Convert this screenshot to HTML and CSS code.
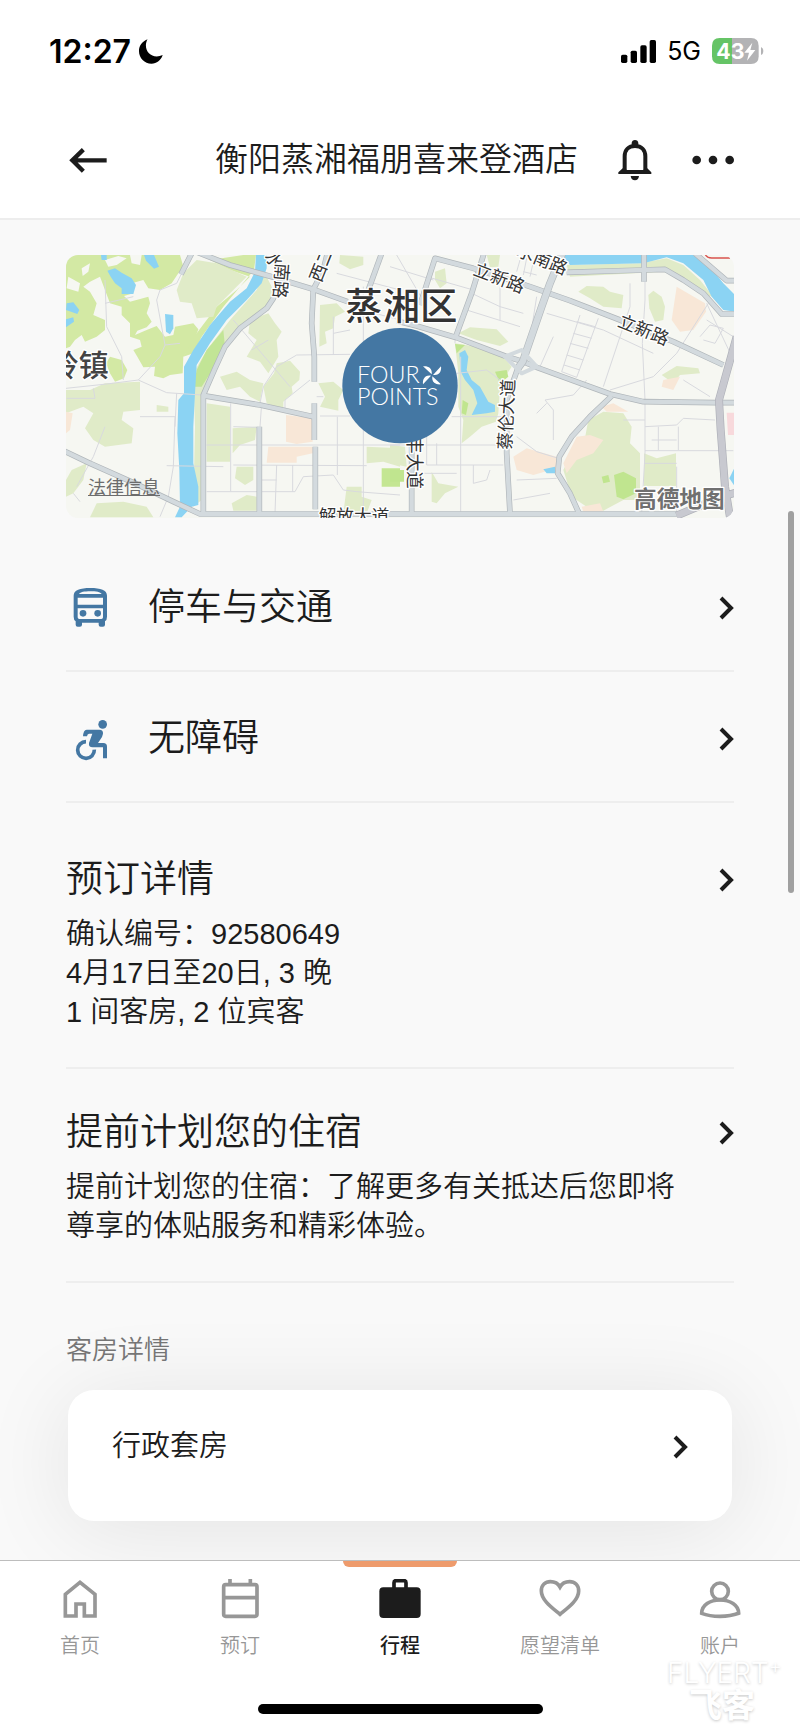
FILE: index.html
```html
<!DOCTYPE html>
<html lang="zh-CN">
<head>
  <meta charset="UTF-8">
  <meta name="viewport" content="width=device-width, initial-scale=1.0">
  <title>衡阳蒸湘福朋喜来登酒店</title>
  <link rel="stylesheet" href="styles.css">
</head>
<body>
  <header class="top">
    <div class="status-bar">
      <span class="time">12:27</span>
      <svg class="moon" viewBox="417 115 73 74" aria-hidden="true"><path d="M443 115C425 122 417 136 417 151C417 172 434 189 455 189C471 189 484 179 489 163C483 166 477 167 471 167C452 167 438 153 438 134C438 127 440 120 443 115Z"/></svg>
      <svg class="signal" viewBox="660 117 105 69" aria-hidden="true">
        <rect x="660" y="161" width="19" height="25" rx="5"/>
        <rect x="689" y="149" width="19" height="37" rx="5"/>
        <rect x="718" y="133" width="19" height="53" rx="5"/>
        <rect x="746" y="117" width="19" height="69" rx="5"/>
      </svg>
      <span class="network">5G</span>
      <svg class="battery" viewBox="933 112 156 78" role="img" aria-label="43%">
        <path fill="#b3b3b5" d="M993 112H1050Q1073 112 1073 135V167Q1073 190 1050 190H993Z"/>
        <path fill="#65c466" d="M993 112H956Q933 112 933 135V167Q933 190 956 190H993Z"/>
        <path fill="#b3b3b5" d="M1080 139Q1087 142 1087 151Q1087 160 1080 163Z"/>
        <text class="battery-text" x="946" y="176">43</text>
        <path fill="#fff" d="M1054 126L1030 156H1044L1038 180L1063 148H1048Z"/>
      </svg>
    </div>
    <div class="title-bar">
      <button class="icon-btn" aria-label="返回">
        <svg class="back" viewBox="198 436 123 75"><path d="M320 473H218M250 441L217 473L250 506"/></svg>
      </button>
      <h1>衡阳蒸湘福朋喜来登酒店</h1>
      <button class="icon-btn" aria-label="通知">
        <svg class="bell" viewBox="657 412 102 126">
          <path d="M677 512V464C677 445 688 433 708 433C728 433 739 445 739 464V512" fill="none" stroke="#1c1c1c" stroke-width="12"/>
          <path d="M698 431V424Q699 415 708 415Q717 415 718 424V431Z"/>
          <path d="M658 517V512L672 499L684 505H732L744 499L757 512V517Z"/>
          <path d="M695 523H720Q718 536 708 536Q697 536 695 523Z"/>
        </svg>
      </button>
      <button class="icon-btn" aria-label="更多">
        <svg class="dots" viewBox="878 453 126 42"><circle cx="892" cy="474" r="13"/><circle cx="941" cy="474" r="13"/><circle cx="991" cy="474" r="13"/></svg>
      </button>
    </div>
  </header>

  <main>
    <div class="map">
      <svg viewBox="0 0 2004 789" role="img" aria-label="地图">
        <defs>
          <g id="roads">
            <g transform="translate(-48 -45)">
              <path d="M393 103L425 40"/>
              <path d="M440 36L540 75L665 110L790 148L893 185"/>
              <path d="M790 148L820 90L832 40"/>
              <path d="M790 148L785 250L793 350V425M793 490V600M796 620V808"/>
              <path d="M690 110L670 175L650 205L570 265L525 320L495 385L460 465V820"/>
              <path d="M460 467L630 495L790 530"/>
              <path d="M628 560V820"/>
              <path d="M40 632L120 670L250 728L370 785L450 822H1050"/>
              <path d="M955 150L995 40"/>
            </g>
            <g transform="translate(972 -45)">
              <path d="M20 243L80 258L200 293L345 348L400 365L440 382L660 462L760 485L975 488H1040"/>
              <path d="M90 195L135 55L250 85L420 140L540 182L690 240L850 305L1000 375"/>
              <path d="M197 290L245 160L282 40"/>
              <path d="M385 380L350 480V640L360 820"/>
              <path d="M530 97L760 90L825 88L880 120L940 160L995 222H1040"/>
              <path d="M762 40V125"/>
              <path d="M915 40L1010 122H1040"/>
              <path d="M665 468L600 530L545 590L508 650L503 700L540 760L568 822"/>
              <path d="M65 600V820M0 822H870"/>
            </g>
          </g>
        </defs>

        <rect width="2004" height="789" fill="#f6f7f2"/>

        <!-- parks and blocks, west side -->
        <g transform="translate(-48 -45)">
          <g fill="#d3e9a4">
            <path d="M48 45H390L400 80L385 100L365 130L330 150L295 145L280 120L245 130L250 160L222 168L240 185L295 170L300 190L290 220L305 245L290 262L262 272L255 285L290 270L320 258L345 290L370 285L375 260L430 250L445 268L430 310L400 350L398 400L360 405L340 415L312 408L315 380L280 382L262 350L250 330L275 320L270 300L240 290L240 250L215 225L215 200L180 190L165 150L150 110L120 125L100 140L120 155L140 190L130 225L165 240L165 270L140 290L105 305L95 285L75 300L60 320L48 325Z"/>
            <path d="M180 350L215 360L232 390L222 415L195 425L180 400L168 370Z"/>
            <path d="M480 60L580 45H618L612 90L520 200L455 290L430 340L400 350L440 280L470 240L500 200L560 150L600 110L540 90Z"/>
          </g>
          <g fill="#f6f7f2">
            <path d="M95 85L120 70L115 95L98 108Z"/>
            <path d="M165 60L205 48L230 55L200 75L175 80Z"/>
            <path d="M240 45H275L270 75L245 70Z"/>
            <path d="M335 150L385 130L375 190L410 240L350 245L325 200L300 175Z"/>
            <path d="M55 110L90 130L85 155L50 145Z"/>
          </g>
          <g fill="#e0ebc8">
            <path d="M400 100L440 60L500 70L590 110L550 150L500 200L490 230L440 235L425 190L390 185L380 150Z"/>
            <path d="M120 450L165 430L270 425V510L220 515L215 540L250 565L245 610L165 620L130 600L105 565L130 520L100 500L60 515L48 520V450Z"/>
            <path d="M650 110L680 170L655 205L600 245L540 300L500 380L455 470V780L430 800L435 560L430 400L470 330L540 240L620 150L640 100Z"/>
            <path d="M600 240L655 220L675 250L695 275L680 300L685 350L655 400L630 365L590 350L620 300L595 280Z"/>
            <path d="M680 370L720 362L750 395L748 420L725 440L728 460L700 485L700 510L650 490L640 440L672 400Z"/>
            <path d="M510 410L560 395L600 420L640 430L630 485L600 470L570 440L530 450Z"/>
            <path d="M470 490L540 500V665H470Z"/>
            <path d="M548 565L620 560L615 600L570 615L548 640Z"/>
            <path d="M560 680H610V720L585 735L555 715Z"/>
            <path d="M545 790L590 765L620 770V812H550Z"/>
            <path d="M810 195L860 190L885 215L855 230L850 265L825 275L830 310L808 320Z"/>
            <path d="M870 45L940 50V75L900 88L868 70Z"/>
            <path d="M805 430L850 425L880 450L865 480V512L810 500L825 470Z"/>
            <path d="M950 620L1050 625V680L1000 665L950 670Z"/>
            <path d="M890 740H935V770L965 780L950 820H880Z"/>
            <path d="M65 690L110 670L100 720L70 760L48 770V720Z"/>
            <path d="M140 790L220 785L290 800L310 832H120Z"/>
            <path d="M320 495L355 500V515H320Z"/>
          </g>
          <path fill="#c2e596" d="M520 270L525 320L490 385L455 440L430 440L440 390L470 330Z"/>
          <path fill="#c4e693" d="M995 685H1050V740H995Z"/>
          <g fill="#f8e7d7">
            <path d="M708 525L788 535V605L740 612L708 605Z"/>
            <path d="M655 620H788V640L740 650V668H650Z"/>
            <path d="M48 515L68 520L60 570L48 580Z"/>
          </g>
          <g fill="#8bd3f3">
            <path d="M618 45H650V85L635 130L590 180L530 240L480 310L440 375L435 460L430 560V670L445 740L445 795L425 800L395 832H375L390 800L388 690L382 580L385 480L402 460V380L430 330L480 255L540 185L590 145L615 95Z"/>
            <path d="M172 92L195 85L215 98L245 115L258 135L250 162H215V145L195 130L182 110Z"/>
            <path d="M282 45H312L327 80L312 86L288 62Z"/>
            <path d="M345 222L370 225V265L360 283L348 275Z"/>
            <path d="M50 190L70 187L88 210L82 222L48 210Z"/>
            <path d="M48 238L70 232L72 245L48 262Z"/>
            <path d="M153 45H170V60H155Z"/>
          </g>
        </g>

        <!-- parks and blocks, east side -->
        <g transform="translate(972 -45)">
          <g fill="#e0ebc8">
            <path d="M195 310L260 320L340 350L365 380L345 410L330 440L325 520L318 545L275 560L240 590L215 610L220 540L205 500V400Z"/>
            <path d="M205 280L240 262L320 268L355 305L330 318L260 300Z"/>
            <path d="M565 155L590 138L640 140L660 155L700 165L695 205L640 200L600 175Z"/>
            <path d="M775 165L790 152L815 170L825 200L820 240L795 245L778 205Z"/>
            <path d="M530 75L750 70L830 55L880 75L930 120L970 170L940 165L870 112L820 95L540 110Z"/>
            <path d="M815 405L860 378L925 385L930 400L870 405L850 430Z"/>
            <path d="M595 540L640 515L700 520L725 560L720 610L750 640V780L700 780L640 812L590 800L545 770L520 690L545 640L580 620Z"/>
            <path d="M762 640L800 655L858 640V738H762Z"/>
            <path d="M125 695L145 730L205 740L165 760L140 790L125 785Z"/>
            <path d="M135 95L165 85L170 130L150 145L135 120Z"/>
            <path d="M290 45H330L325 80L300 82Z"/>
            <path d="M0 615L45 620L50 680L0 670Z"/>
          </g>
          <g fill="#c0e58f">
            <path d="M195 312L225 315L200 340Z"/>
            <path d="M315 395L350 390L355 410L330 430Z"/>
            <path d="M672 705L700 695L738 715V760L700 778L680 770Z"/>
            <path d="M635 710L655 705L660 725L640 730Z"/>
            <path d="M0 690H42V725H0Z"/>
            <path d="M218 480L235 490L228 525L215 520Z"/>
          </g>
          <g fill="#f8e7d7">
            <path d="M860 140L945 190L948 215L910 270L870 275L845 240Z"/>
            <path d="M370 650L410 625L500 650V685L430 705L380 690Z"/>
            <path d="M560 590L600 585L640 600L610 640L560 660L530 700L520 670Z"/>
            <path d="M820 420L870 410L850 450L815 440Z"/>
            <path d="M635 500L670 490L715 515L650 515Z"/>
            <path d="M575 800L630 790L640 815H580Z"/>
          </g>
          <path fill="#f8d9dc" d="M1010 518H1035V585H1014Z"/>
          <g fill="#8bd3f3">
            <path d="M515 45H910L960 80L1000 130L1035 165V215L1000 210L965 170L940 120L880 70L830 52L760 70L540 75Z"/>
            <path d="M208 340L225 330L235 350L230 390L245 420L270 440L295 485L315 495V515L290 520L245 525L262 490L250 450L225 420L212 395Z"/>
            <path d="M460 688L495 680V700H470Z"/>
            <path d="M1018 715L1035 680V740Z"/>
          </g>
        </g>

        <!-- side streets -->
        <g class="street">
          <g transform="translate(-48 -45)">
            <path d="M48 445L170 432L265 420L330 350L345 315L390 310M345 315L320 180L330 150L380 130L395 100"/>
            <path d="M265 420L350 458L455 465M165 190L250 170M165 120L170 260L215 350L220 420M270 530H375L370 680L355 770L330 830M380 460L375 560"/>
            <path d="M550 240L720 440M605 330L655 300M630 490L640 440L680 380L740 345L900 343M635 490L630 560"/>
            <path d="M705 505V480L780 420M470 615H1050M350 677L520 680M550 675L950 677M542 490V755H470M542 755H735L760 710L850 705L880 750L920 755L1050 765"/>
            <path d="M862 530V705M810 528H900M728 675V755M680 675L675 820M635 720H680M550 560L625 562M940 140V820M900 200L1050 240M850 280L900 270M860 100L1050 150M850 230V345M800 470H820"/>
            <path d="M50 475H135L130 445M165 560L130 650L80 740M70 760L90 785"/>
          </g>
          <g transform="translate(972 -45)">
            <path d="M195 310V300M212 350V820M110 560V675H340M0 615H340M250 675V730L290 720L300 690M140 610V675M185 530H340"/>
            <path d="M765 100V180L757 310L765 480V640L755 820M765 632H1030M765 560L860 555L880 535L975 540M865 560V630M805 560V630M785 600H860"/>
            <path d="M660 450L790 410L860 340L955 190M720 130V200L690 290L640 440M570 225L515 395L560 412L625 235M560 245L615 260M550 280L605 295M540 310L595 325M530 345L580 360M522 375L570 390"/>
            <path d="M470 220L640 270L790 340M450 380L490 290M380 590L440 635L505 655M465 480L490 510V600M465 480L550 465L590 420M440 520L470 490"/>
            <path d="M400 95L440 105M390 60L380 95M410 55L400 105M430 65L420 110M230 210L390 260M330 140V240M245 160L330 200L400 220"/>
            <path d="M950 190L1035 370M950 240L1030 290M930 290L960 255L1000 265L975 310L940 300M880 420L960 470M700 540H765M60 700H200M380 720L500 715M370 780L480 760"/>
            <path d="M0 80L130 120M20 45L110 200M110 110L250 150M440 170L415 330M200 400L290 390L330 420M860 680V820M765 670H860"/>
          </g>
        </g>

        <use href="#roads" class="road-edge"/>
        <use href="#roads" class="road"/>
        <g transform="translate(972 -45)" fill="none" stroke-linejoin="round">
          <path d="M517 40L480 130L455 200L398 365L380 390" stroke="#b3b9bd" stroke-width="23"/>
          <path d="M517 40L480 130L455 200L398 365L380 390" stroke="#d3dade" stroke-width="19"/>
          <path d="M345 350L395 330L440 380L395 400Z" stroke="#d3dade" stroke-width="12"/>
          <path d="M1040 290L987 480L992 570L1005 740L1020 832M860 827L990 772L1040 757" stroke="#aeb0b8" stroke-width="24"/>
          <path d="M1040 290L987 480L992 570L1005 740L1020 832M860 827L990 772L1040 757" stroke="#c8c9d0" stroke-width="20"/>
          <path d="M945 42Q950 54 965 54H1020" stroke="#d9534f" stroke-width="4"/>
        </g>

        <g class="place">
          <text class="district" x="838" y="194">蒸湘区</text>
          <text class="town" x="-52" y="362">岭镇</text>
        </g>
        <g class="road-name" transform="translate(-48 -45)">
          <text transform="translate(641 50) rotate(50)">水</text>
          <text transform="translate(679 68) rotate(95)">南路</text>
          <text transform="translate(812 130) rotate(-68)">西二</text>
          <text x="806" y="850">解放大道</text>
        </g>
        <g class="road-name" transform="translate(972 -45)">
          <text transform="translate(54 588) rotate(90)">丰大道</text>
          <text transform="translate(363 630) rotate(-87)">蔡伦大道</text>
          <text transform="translate(247 103) rotate(21)">立新路</text>
          <text transform="translate(680 257) rotate(22)">立新路</text>
          <text transform="translate(376 46) rotate(22)">水南路</text>
        </g>
        <text class="provider" x="1704" y="756">高德地图</text>

        <circle cx="1002" cy="392" r="173" fill="#4477a3"/>
        <g class="brand">
          <text x="873" y="385">FOUR</text>
          <text x="873" y="450">POINTS</text>
          <g transform="translate(1098 361)" fill="#fff">
            <path id="blade" d="M-1 -3L-27 -27C-14 -29 2 -23 -1 -3Z"/>
            <use href="#blade" transform="rotate(90)"/>
            <use href="#blade" transform="rotate(180)"/>
            <use href="#blade" transform="rotate(270)"/>
          </g>
        </g>
      </svg>
      <a class="legal" href="#">法律信息</a>
    </div>

    <a class="row" href="#">
      <svg class="row-icon" viewBox="78 73 150 138" aria-hidden="true">
        <path fill-rule="evenodd" d="M101 105C101 88 120 82 151 82C182 82 201 88 201 105V168Q201 178 195 182V192Q195 198 189 198H182Q176 198 176 192V186H126V192Q126 198 120 198H113Q107 198 107 192V182Q101 178 101 168ZM117 100H185C181 94 169 92 151 92C133 92 121 94 117 100ZM113 111V132H189V111ZM113 143V170Q113 175 118 175H184Q189 175 189 170V143Z"/>
        <circle cx="129" cy="158" r="10"/><circle cx="173" cy="158" r="10"/>
      </svg>
      <span class="row-title">停车与交通</span>
      <svg class="chevron" viewBox="0 0 15 24" aria-hidden="true"><path d="M2 2L12 12L2 22"/></svg>
    </a>

    <a class="row" href="#">
      <svg class="row-icon" viewBox="78 466 150 138" aria-hidden="true">
        <circle cx="188" cy="491" r="13"/>
        <path d="M140 507H178Q190 507 189 519L186 529L174 547H190Q201 547 201 558V593H189V560H158Q145 560 147 547L157 519H147Q142 519 141 527H129Q130 508 140 507Z"/>
        <path fill="none" stroke="#4477a3" stroke-width="11" d="M138 543A25 25 0 1 0 163 567"/>
      </svg>
      <span class="row-title">无障碍</span>
      <svg class="chevron" viewBox="0 0 15 24" aria-hidden="true"><path d="M2 2L12 12L2 22"/></svg>
    </a>

    <section class="block booking">
      <a class="block-head" href="#">
        <h2>预订详情</h2>
        <svg class="chevron" viewBox="0 0 15 24" aria-hidden="true"><path d="M2 2L12 12L2 22"/></svg>
      </a>
      <p>确认编号：92580649</p>
      <p>4月17日至20日, 3 晚</p>
      <p>1 间客房, 2 位宾客</p>
    </section>

    <section class="block">
      <a class="block-head" href="#">
        <h2>提前计划您的住宿</h2>
        <svg class="chevron" viewBox="0 0 15 24" aria-hidden="true"><path d="M2 2L12 12L2 22"/></svg>
      </a>
      <p class="plan-text">提前计划您的住宿：了解更多有关抵达后您即将尊享的体贴服务和精彩体验。</p>
    </section>

    <section class="rooms">
      <h3>客房详情</h3>
      <a class="card" href="#">
        <span>行政套房</span>
        <svg class="chevron" viewBox="0 0 15 24" aria-hidden="true"><path d="M2 2L12 12L2 22"/></svg>
      </a>
    </section>
  </main>

  <footer>
    <nav>
      <a href="#">
        <svg viewBox="177 597 126 120" aria-hidden="true"><path d="M196 708V643L240 607L285 643V708H253V672H228V708Z"/></svg>
        首页
      </a>
      <a href="#">
        <svg viewBox="657 597 126 120" aria-hidden="true"><rect x="671" y="614" width="100" height="95" rx="6"/><path d="M671 653H771M690 597V612M751 597V612"/></svg>
        预订
      </a>
      <a class="active" href="#">
        <svg viewBox="1137 597 126 120" aria-hidden="true"><rect x="1138" y="622" width="124" height="92" rx="12" fill="#1c1c1c" stroke="none"/><path d="M1182 624V608Q1182 602 1188 602H1212Q1218 602 1218 608V624"/></svg>
        行程
      </a>
      <a href="#">
        <svg viewBox="417 597 126 120" aria-hidden="true"><path d="M480 703C460 686 424 662 424 633C424 615 436 605 451 605C464 605 475 612 480 621C485 612 496 605 509 605C524 605 536 615 536 633C536 662 500 686 480 703Z"/></svg>
        愿望清单
      </a>
      <a href="#">
        <svg viewBox="897 597 126 120" aria-hidden="true"><circle cx="960" cy="634" r="25"/><path d="M905 700C905 675 930 660 960 660C990 660 1016 675 1016 700Q992 709 960 709Q928 709 905 700Z"/></svg>
        账户
      </a>
    </nav>
    <div class="home-bar"></div>
    <div class="watermark">
      <span>FLYERT<sup>+</sup></span>
      <b>飞客</b>
    </div>
  </footer>
  <div class="scroll-thumb"></div>
</body>
</html>
```

FILE: styles.css
```css
* {
  box-sizing: border-box;
}
body {
  margin: 0;
  min-height: 100vh;
  display: flex;
  flex-direction: column;
  position: relative;
  background: #f9f9f9;
  color: #1c1c1c;
  font-family: "Liberation Sans", "Noto Sans CJK SC", sans-serif;
  font-size: 29px;
  line-height: 39px;
  font-weight: 350;
}
h1, h2, h3, p {
  margin: 0;
  font-weight: 350;
}
a {
  color: inherit;
  text-decoration: none;
}
svg {
  display: block;
  flex: none;
}

/* header */
.top {
  background: #fff;
  border-bottom: 2px solid #ededed;
}
.status-bar {
  display: flex;
  align-items: center;
  height: 102px;
  padding: 0 36px 0 49px;
  color: #000;
  font-family: Inter, sans-serif;
}
.time {
  font-size: 32px;
  font-weight: 600;
}
.moon {
  width: 24px;
  height: 25px;
  margin-left: 8px;
}
.signal {
  width: 35px;
  height: 23px;
  margin-left: auto;
}
.network {
  margin: 0 11px;
  font-size: 25px;
  font-weight: 400;
}
.battery {
  width: 52px;
  height: 26px;
}
.battery-text {
  font: 700 64px Inter, sans-serif;
  fill: #fff;
}
.title-bar {
  display: flex;
  align-items: center;
  gap: 40px;
  height: 116px;
  padding: 0 66px;
}
h1 {
  margin-left: auto;
  font-size: 33px;
  line-height: 48px;
}
.icon-btn {
  padding: 0;
  border: 0;
  background: none;
  color: inherit;
  cursor: pointer;
}
.icon-btn svg {
  fill: #1c1c1c;
}
.icon-btn .back {
  width: 41px;
  height: 25px;
  fill: none;
  stroke: #1c1c1c;
  stroke-width: 13;
}
.bell {
  width: 34px;
  height: 42px;
}
.dots {
  width: 42px;
  height: 14px;
}

main {
  flex: 1;
  padding: 35px 66px 39px;
}

/* map */
.map {
  position: relative;
  margin-bottom: 23px;
  border-radius: 12px;
  overflow: hidden;
}
.map svg {
  width: 100%;
  height: auto;
}
.map text {
  font-family: "Noto Sans CJK SC", sans-serif;
  paint-order: stroke;
  stroke: #fff;
  stroke-width: 8px;
  stroke-linejoin: round;
  fill: #333;
}
.street {
  fill: none;
  stroke: #d8d9de;
  stroke-width: 3;
}
.road-edge {
  fill: none;
  stroke: #b0b6ba;
  stroke-width: 17;
  stroke-linejoin: round;
}
.road {
  fill: none;
  stroke: #d3dade;
  stroke-width: 13;
  stroke-linejoin: round;
}
.map .place text {
  font-weight: 500;
}
.map .district {
  font-size: 112px;
}
.map .town {
  font-size: 90px;
  fill: #444;
}
.road-name text {
  font-size: 53px;
  font-weight: 400;
}
.map .provider {
  font-size: 68px;
  font-weight: 700;
  fill: #707070;
}
.map .brand text {
  font-family: Lato, sans-serif;
  font-size: 70px;
  font-weight: 300;
  stroke: none;
  fill: #fff;
}
.legal {
  position: absolute;
  left: 22px;
  bottom: 17px;
  font-size: 18px;
  line-height: 26px;
  font-weight: 400;
  color: #6c6c6c;
  text-decoration: underline;
}

/* link rows */
.row {
  display: flex;
  align-items: center;
  gap: 32px;
  height: 131px;
  padding-top: 4px;
  border-bottom: 2px solid #eeeeee;
}
.row-icon {
  width: 50px;
  height: 46px;
  fill: #4477a3;
}
.row-title {
  flex: 1;
  font-size: 37px;
  line-height: 48px;
}
.chevron {
  width: 15px;
  height: 24px;
  fill: none;
  stroke: #1c1c1c;
  stroke-width: 4;
}

/* text blocks */
.block {
  padding: 40px 0 35px;
  border-bottom: 2px solid #eeeeee;
}
.booking {
  padding-top: 53px;
}
.block-head {
  display: flex;
  align-items: center;
  justify-content: space-between;
  margin-bottom: 11px;
}
h2 {
  font-size: 37px;
  line-height: 48px;
}
.plan-text {
  padding-right: 48px;
}

/* rooms */
.rooms {
  padding: 51px 2px 0;
}
h3 {
  position: relative;
  z-index: 1;
  margin: 0 -2px 24px;
  font-size: 26px;
  line-height: 32px;
  color: #757575;
}
.card {
  display: flex;
  align-items: center;
  justify-content: space-between;
  padding: 37px 44px 55px;
  border-radius: 26px;
  background: #fff;
  box-shadow: 0 8px 90px rgba(0, 0, 0, 0.09);
}

/* tab bar */
footer {
  position: relative;
  background: #fff;
  border-top: 1px solid #bdbdbd;
  padding-bottom: 17px;
}
nav {
  display: flex;
}
nav a {
  flex: 1;
  display: flex;
  flex-direction: column;
  align-items: center;
  gap: 15px;
  padding-top: 18px;
  position: relative;
  font-size: 20px;
  line-height: 24px;
  color: #979797;
}
nav svg {
  width: 42px;
  height: 40px;
  fill: none;
  stroke: #979797;
  stroke-width: 11;
}
nav .active {
  color: #1c1c1c;
  font-weight: 500;
}
nav .active svg {
  stroke: #1c1c1c;
}
.active::before {
  content: "";
  position: absolute;
  top: 0;
  width: 114px;
  height: 6px;
  border-radius: 0 0 6px 6px;
  background: #ee9b6c;
}
.home-bar {
  width: 285px;
  height: 10px;
  margin: 46px auto 0;
  border-radius: 5px;
  background: #000;
}
.watermark {
  position: absolute;
  right: 13px;
  bottom: 8px;
  width: 120px;
  color: #fff;
  font-family: Inter, "Noto Sans CJK SC", sans-serif;
  font-size: 28px;
  line-height: 28px;
  text-shadow: 0 1px 3px rgba(0, 0, 0, 0.22);
}
.watermark sup {
  font-size: 20px;
  line-height: 0;
}
.watermark b {
  display: block;
  padding-left: 22px;
  font-size: 33px;
  line-height: 36px;
}

.scroll-thumb {
  position: absolute;
  top: 511px;
  right: 6px;
  width: 6px;
  height: 382px;
  border-radius: 3px;
  background: #a0a0a0;
}
```
